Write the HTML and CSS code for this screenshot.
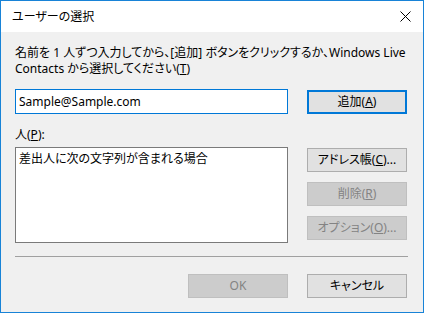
FILE: index.html
```html
<!DOCTYPE html>
<html lang="ja">
<head>
<meta charset="utf-8">
<title>ユーザーの選択</title>
<link rel="stylesheet" href="styles.css">
</head>
<body>
<div class="window">
  <div class="titlebar">
    <span class="title">ユーザーの選択</span>
    <svg class="close" width="11" height="11" viewBox="0 0 11 11"><path d="M0.5 0.5 L10.5 10.5 M10.5 0.5 L0.5 10.5" stroke="#000" stroke-width="1" fill="none"/></svg>
  </div>
  <div class="content">
    <div class="intro">名前を 1 人ずつ入力してから、[追加] ボタンをクリックするか、Windows Live<br>Contacts から選択してください(<u>T</u>)</div>
    <div class="row-add">
      <div class="input">Sample@Sample.com</div>
      <div class="btn default">追加(<u>A</u>)</div>
    </div>
    <div class="people-label">人(<u>P</u>):</div>
    <div class="row-list">
      <div class="listbox">差出人に次の文字列が含まれる場合</div>
      <div class="side">
        <div class="btn">アドレス帳(<u>C</u>)...</div>
        <div class="btn disabled">削除(<u>R</u>)</div>
        <div class="btn disabled">オプション(<u>O</u>)...</div>
      </div>
    </div>
    <div class="separator"></div>
    <div class="footer">
      <div class="btn disabled">OK</div>
      <div class="btn">キャンセル</div>
    </div>
  </div>
</div>
</body>
</html>
```

FILE: styles.css
```css
* { box-sizing: border-box; }
html, body { margin: 0; padding: 0; background: #ffffff; }
body {
  font-family: "Noto Sans", "Noto Sans CJK JP", sans-serif;
  font-size: 12px;
  font-feature-settings: "palt";
  color: #000;
}
.window {
  width: 424px;
  height: 313px;
  border: 1px solid #1883d7;
  display: flex;
  flex-direction: column;
}
.titlebar {
  height: 31px;
  background: #ffffff;
  display: flex;
  align-items: center;
  justify-content: space-between;
  padding: 0 12px 0 11px;
  flex: none;
}
.title { line-height: 16px; }
.close { display: block; }
.content {
  flex: 1;
  background: #f0f0f0;
  padding: 13px 15px 0 14px;
  display: flex;
  flex-direction: column;
}
.intro {
  line-height: 16px;
  white-space: nowrap;
}
.row-add {
  margin-top: 12px;
  display: flex;
  align-items: flex-start;
  gap: 19px;
}
.input {
  width: 273px;
  height: 25px;
  background: #fff;
  border: 1px solid #0078d7;
  padding-left: 3px;
  line-height: 23px;
}
.btn {
  width: 100px;
  height: 24px;
  background: #e1e1e1;
  border: 1px solid #adadad;
  display: flex;
  align-items: center;
  justify-content: center;
  line-height: 16px;
  white-space: nowrap;
}
.btn.default {
  margin-top: 1px;
  border: 2px solid #0078d7;
}
.btn.disabled {
  background: #cccccc;
  border-color: #bfbfbf;
  color: #838383;
}
.people-label {
  margin-top: 13px;
  line-height: 16px;
}
.row-list {
  margin-top: 4px;
  display: flex;
  align-items: flex-start;
  gap: 19px;
}
.listbox {
  width: 273px;
  height: 96px;
  background: #fff;
  border: 1px solid #7a7a7a;
  padding: 3px 3px;
  line-height: 16px;
}
.side {
  margin-top: 1px;
  display: flex;
  flex-direction: column;
  gap: 10px;
}
.separator {
  margin-top: 13px;
  height: 1px;
  background: #a0a0a0;
  width: 393px;
}
.footer {
  margin-top: 17px;
  display: flex;
  justify-content: flex-end;
  gap: 19px;
  padding-right: 1px;
}
```
